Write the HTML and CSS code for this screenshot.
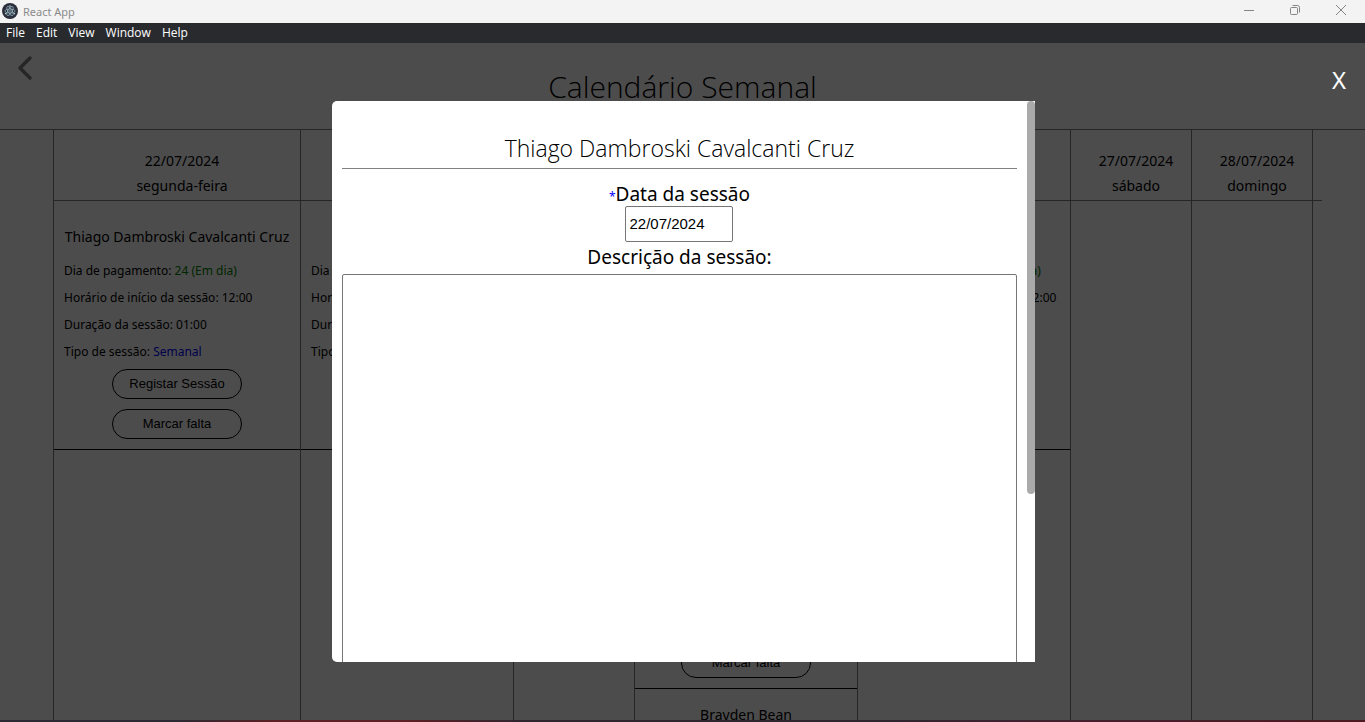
FILE: index.html
```html
<!DOCTYPE html>
<html lang="pt">
<head>
<meta charset="utf-8">
<title>React App</title>
<link rel="stylesheet" href="styles.css">
</head>
<body>
<header class="titlebar">
  <svg class="app-icon" viewBox="0 0 16 16" aria-hidden="true">
    <circle cx="8" cy="8" r="8" fill="#2b2e3b"/>
    <g fill="none" stroke="#a9cdd6" stroke-width=".8" opacity=".8">
      <ellipse cx="8" cy="8" rx="5.2" ry="2"/>
      <ellipse cx="8" cy="8" rx="5.2" ry="2" transform="rotate(60 8 8)"/>
      <ellipse cx="8" cy="8" rx="5.2" ry="2" transform="rotate(120 8 8)"/>
    </g>
    <g fill="#a9cdd6"><circle cx="8" cy="8" r=".7"/><circle cx="3.6" cy="10.6" r=".8"/><circle cx="12.4" cy="10.6" r=".8"/><circle cx="8" cy="3" r=".8"/></g>
  </svg>
  <span class="app-name">React App</span>
  <div class="window-controls">
    <button type="button" aria-label="Minimize"><svg viewBox="0 0 12 12"><path d="M1 6.500h10"/></svg></button>
    <button type="button" aria-label="Restore"><svg viewBox="0 0 12 12"><rect x="1.500" y="3.500" width="7" height="7" rx="1"/><path d="M3.500 1.500h5a2 2 0 0 1 2 2v5"/></svg></button>
    <button type="button" aria-label="Close"><svg viewBox="0 0 12 12"><path d="M1 1l10 10M11 1L1 11"/></svg></button>
  </div>
</header>
<nav class="menubar">
  <button type="button">File</button>
  <button type="button">Edit</button>
  <button type="button">View</button>
  <button type="button">Window</button>
  <button type="button">Help</button>
</nav>
<main class="page">
  <div class="page-head">
    <a class="back" href="#" aria-label="Voltar"><svg viewBox="0 0 16 26"><path d="M13 3L3 13l10 10"/></svg></a>
    <h1>Calendário Semanal</h1>
  </div>
  <div class="week">
    <div class="gutter"></div>
    <section class="day">
      <h2>22/07/2024<br>segunda-feira</h2>
      <article class="card">
        <h3>Thiago Dambroski Cavalcanti Cruz</h3>
        <p>Dia de pagamento: <span class="ok">24 (Em dia)</span></p>
        <p>Horário de início da sessão: 12:00</p>
        <p>Duração da sessão: 01:00</p>
        <p>Tipo de sessão: <span class="kind">Semanal</span></p>
        <button type="button">Registar Sessão</button>
        <button type="button">Marcar falta</button>
      </article>
    </section>
    <section class="day">
      <h2>23/07/2024<br>terça-feira</h2>
      <article class="card">
        <h3></h3>
        <p>Dia de pagamento: <span class="ok">24 (Em dia)</span></p>
        <p>Horário de início da sessão: 12:00</p>
        <p>Duração da sessão: 01:00</p>
        <p>Tipo de sessão: <span class="kind">Semanal</span></p>
        <button type="button">Registar Sessão</button>
        <button type="button">Marcar falta</button>
      </article>
    </section>
    <section class="day">
      <h2>24/07/2024<br>quarta-feira</h2>
    </section>
    <section class="day">
      <h2>25/07/2024<br>quinta-feira</h2>
      <article class="card">
        <h3></h3>
        <p>Dia de pagamento: <span class="ok">24 (Em dia)</span></p>
        <p>Horário de início da sessão: 12:00</p>
        <p>Duração da sessão: 01:00</p>
        <p>Tipo de sessão: <span class="kind">Semanal</span></p>
        <button type="button">Registar Sessão</button>
        <button type="button">Marcar falta</button>
      </article>
      <article class="card">
        <h3></h3>
        <p>Dia de pagamento: <span class="ok">24 (Em dia)</span></p>
        <p>Horário de início da sessão: 12:00</p>
        <p>Duração da sessão: 01:00</p>
        <p>Tipo de sessão: <span class="kind">Semanal</span></p>
        <button type="button">Registar Sessão</button>
        <button type="button">Marcar falta</button>
      </article>
      <article class="card">
        <h3>Brayden Bean</h3>
      </article>
    </section>
    <section class="day">
      <h2>26/07/2024<br>sexta-feira</h2>
      <article class="card">
        <h3></h3>
        <p>Dia de pagamento: <span class="ok">24 (Em dia)</span></p>
        <p>Horário de início da sessão: 12:00</p>
        <p>Duração da sessão: 01:00</p>
        <p>Tipo de sessão: <span class="kind">Semanal</span></p>
        <button type="button">Registar Sessão</button>
        <button type="button">Marcar falta</button>
      </article>
    </section>
    <section class="day">
      <h2>27/07/2024<br>sábado</h2>
    </section>
    <section class="day">
      <h2>28/07/2024<br>domingo</h2>
    </section>
    <div class="day end"><div class="end-head"></div></div>
  </div>
  <div class="overlay">
    <button type="button" class="close" aria-label="Fechar">X</button>
    <div class="modal" role="dialog" aria-labelledby="patient">
      <form class="session">
        <h2 id="patient">Thiago Dambroski Cavalcanti Cruz</h2>
        <label for="date"><span class="required">*</span>Data da sessão</label>
        <input id="date" type="text" value="22/07/2024">
        <label for="notes">Descrição da sessão:</label>
        <textarea id="notes"></textarea>
      </form>
      <div class="scroll-track"><div class="scroll-thumb"></div></div>
    </div>
  </div>
</main>
<div class="desktop-edge"></div>
</body>
</html>
```
FILE: styles.css
```css
* {
  box-sizing: border-box;
}

body {
  margin: 0;
  height: 100vh;
  display: flex;
  flex-direction: column;
  overflow: hidden;
  font-family: "Noto Sans", "Open Sans", sans-serif;
  color: #000;
}

h1, h2, h3, p {
  margin: 0;
  font-weight: 400;
}

button {
  font-family: inherit;
}

/* Window frame */
.titlebar {
  flex: none;
  height: 23px;
  display: flex;
  align-items: center;
  padding: 0 1px 1px 2px;
  background: #f3f3f3;
}

.app-icon {
  width: 16px;
  height: 16px;
}

.app-name {
  margin-left: 5px;
  font-size: 11px;
  color: #8b8b8b;
}

.window-controls {
  margin-left: auto;
  display: flex;
}

.window-controls button {
  width: 46px;
  height: 22px;
  padding: 0 0 2px;
  border: 0;
  background: none;
}

.window-controls svg {
  width: 12px;
  height: 12px;
  display: block;
  margin: auto;
  fill: none;
  stroke: #858585;
  stroke-width: 1;
}

.menubar {
  flex: none;
  height: 20px;
  display: flex;
  align-items: center;
  gap: 11px;
  padding-left: 6px;
  background: #292a2e;
  font-family: "Open Sans", sans-serif;
}

.menubar button {
  padding: 0;
  border: 0;
  background: none;
  font-size: 12px;
  line-height: 18px;
  color: #fff;
}

/* Calendar */
.page {
  position: relative;
  flex: 1;
  min-height: 0;
  display: flex;
  flex-direction: column;
  overflow: hidden;
  background: #fff;
}

.page-head {
  position: relative;
  flex: none;
  height: 87px;
  padding-top: 24px;
  border-bottom: 1px solid #808080;
  text-align: center;
}

.page-head h1 {
  font-family: "Open Sans", sans-serif;
  font-size: 30px;
  font-weight: 300;
  line-height: 40px;
}

.back {
  position: absolute;
  left: 17px;
  top: 12px;
}

.back svg {
  width: 16px;
  height: 26px;
  fill: none;
  stroke: #808080;
  stroke-width: 3.5;
  stroke-linecap: round;
  stroke-linejoin: round;
}

.week {
  flex: 1;
  min-height: 0;
  display: grid;
  grid-template-columns:
    53fr minmax(0, 247fr) minmax(0, 213fr) minmax(0, 121fr) minmax(0, 223fr)
    minmax(0, 213fr) minmax(0, 121fr) minmax(0, 121fr) 53fr;
}

.day {
  border-left: 1px solid #808080;
}

.day h2 {
  height: 71px;
  margin-bottom: 10px;
  padding: 18px 0 0 10px;
  border-bottom: 1px solid #808080;
  font-size: 14px;
  line-height: 25px;
  text-align: center;
}

.end-head {
  width: 9px;
  height: 71px;
  border-bottom: 1px solid #808080;
}

.card {
  display: flex;
  flex-direction: column;
  padding: 15px 10px 10px;
  border-bottom: 1px solid #000;
  white-space: nowrap;
}

.card h3 {
  height: 22px;
  margin-bottom: 9px;
  font-size: 14px;
  line-height: 22px;
  text-align: center;
}

.card p {
  font-size: 12px;
  line-height: 27px;
}

.card button {
  width: 130px;
  height: 30px;
  margin: 4px auto 0;
  padding: 0 0 1px;
  border: 1px solid #000;
  border-radius: 15px;
  background: none;
  font-family: "Liberation Sans", sans-serif;
  font-size: 13px;
}

.card button + button {
  margin-top: 10px;
}

.ok {
  color: green;
}

.kind,
.required {
  color: blue;
}

/* Session dialog */
.overlay {
  position: absolute;
  inset: 0;
  display: flex;
  justify-content: center;
  padding: 58px 0 58px 2px;
  background: rgba(0, 0, 0, 0.7);
}

.close {
  position: absolute;
  top: 21px;
  right: 19px;
  padding: 0;
  border: 0;
  background: none;
  font-size: 24px;
  line-height: 32px;
  color: #fff;
}

.modal {
  width: 51.6%;
  display: flex;
  overflow: hidden;
  border-radius: 5px 0 0 5px;
  background: #fff;
}

.session {
  flex: 1;
  display: flex;
  flex-direction: column;
  align-items: center;
  padding: 31px 10px 0;
}

.session h2 {
  flex: none;
  align-self: stretch;
  height: 37px;
  margin-bottom: 13px;
  border-bottom: 1px solid #808080;
  font-family: "Open Sans", sans-serif;
  font-size: 23px;
  font-weight: 300;
  line-height: 32px;
  text-align: center;
}

.session label {
  flex: none;
  font-size: 19px;
  line-height: 24px;
}

.session input {
  flex: none;
  width: 108px;
  height: 36px;
  margin-bottom: 3px;
  padding: 0 3px 1px;
  border: 1px solid #767676;
  border-radius: 2px;
  font-family: "Liberation Sans", sans-serif;
  font-size: 15px;
}

.session textarea {
  flex: none;
  width: 100%;
  height: 500px;
  margin-top: 5px;
  border: 1px solid #767676;
  border-radius: 2px;
  resize: none;
}

.session .required {
  font-size: 12px;
  line-height: 1;
}

.scroll-track {
  width: 8px;
}

.scroll-thumb {
  height: 70%;
  border-radius: 4px;
  background: #aaa;
}

.desktop-edge {
  flex: none;
  height: 2px;
  background: linear-gradient(90deg, #2c2a33 0, #2c2a33 13%, #5a2023 20%, #5a2023 30%, #2f2630 38%, #2f2630 65%, #43202d 80%, #4a1a20 100%);
}
```
